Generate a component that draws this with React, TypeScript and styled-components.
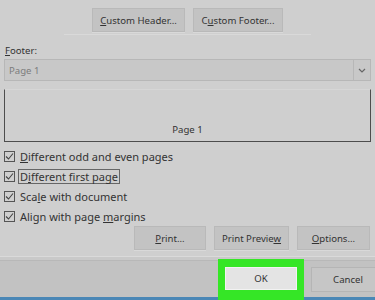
import React from "react";
import styled, { createGlobalStyle } from "styled-components";

const Global = createGlobalStyle`
  html, body { margin: 0; padding: 0; }
  body {
    width: 375px; height: 300px; overflow: hidden;
    background: #cfcfcf;
    font-family: "Noto Sans", "Open Sans", sans-serif;
    font-size: 11px;
    color: #333;
  }
`;

const Dialog = styled.div`
  width: 375px;
  height: 300px;
  display: flex;
  flex-direction: column;
  background: #cfcfcf;
  position: relative;
  overflow: hidden;
`;

const Body = styled.div`
  display: flex;
  flex-direction: column;
  padding: 0 4px 0 4px;
`;

const HeaderRow = styled.div`
  display: flex;
  justify-content: center;
  gap: 8px;
  padding-top: 8px;
  padding-bottom: 2px;
  border-bottom: 1px solid #d9d9d9;
  margin: 0 60px;
`;

const Button = styled.button<{ $w: number }>`
  width: ${(p) => p.$w}px;
  height: 24px;
  background: #c3c3c3;
  border: 1px solid #b9b9b9;
  font-family: inherit;
  font-size: 9.6px;
  color: #333;
  padding: 0;
  display: flex;
  align-items: center;
  justify-content: center;
  box-sizing: border-box;
  box-shadow: 0 1px 0 #d9d9d9;
`;

const Label = styled.div`
  margin-top: 9px;
  padding-left: 1px;
  height: 14px;
  line-height: 14px;
  font-size: 9.6px;
`;

const Combo = styled.div`
  margin-top: 1px;
  height: 22px;
  box-sizing: border-box;
  border: 1px solid #b7b7b7;
  background: #c8c8c8;
  display: flex;
  align-items: stretch;
`;

const ComboText = styled.div`
  flex: 1;
  padding-left: 4px;
  display: flex;
  align-items: center;
  color: #7c7c7c;
  font-size: 9.6px;
`;

const ComboArrow = styled.div`
  width: 16px;
  border-left: 1px solid #b7b7b7;
  display: flex;
  align-items: center;
  justify-content: center;
`;

const Preview = styled.div`
  margin-top: 8px;
  height: 53px;
  box-sizing: border-box;
  border: 1px solid #4d4d4d;
  border-top-color: #d6d6d6;
  display: flex;
  align-items: flex-end;
  justify-content: center;
  padding-bottom: 5px;
  font-size: 9.6px;
`;

const Checks = styled.div`
  display: flex;
  flex-direction: column;
  gap: 5px;
  margin-top: 7px;
`;

const CheckRow = styled.div`
  display: flex;
  align-items: center;
  height: 15px;
  gap: 3px;
`;

const Box = styled.span`
  width: 11px;
  height: 11px;
  box-sizing: border-box;
  border: 1px solid #555;
  display: flex;
  align-items: center;
  justify-content: center;
`;

const CheckText = styled.span<{ $focus?: boolean }>`
  padding: 0 1px;
  border: 1px solid ${(p) => (p.$focus ? "#666" : "transparent")};
  line-height: 13px;
  font-size: 11px;
`;

const ActionRow = styled.div`
  display: flex;
  justify-content: flex-end;
  gap: 8px;
  margin-top: 2px;
  padding-right: 1px;
`;

const Separator = styled.div`
  margin-top: 6px;
  height: 5px;
  border-top: 1px solid #dadada;
  border-bottom: 1px solid #b8b8b8;
  background: #c9c9c9;
  box-sizing: border-box;
`;

const Footer = styled.div`
  flex: 1;
  background: #c2c2c2;
  display: flex;
  align-items: flex-start;
  justify-content: flex-end;
  padding-top: 6px;
  gap: 7px;
  border-bottom: 3px solid #4a87b6;
  margin-right: -10px;
`;

const Highlight = styled.div`
  margin-top: -8px;
  padding: 8px 7px;
  background: #35e626;
  margin-bottom: -12px;
  align-self: stretch;
  position: relative;
  z-index: 1;
`;

const OkButton = styled.button`
  width: 72px;
  height: 23px;
  background: #e4e4e4;
  border: 1px solid #f2f2f2;
  font-family: inherit;
  font-size: 9.6px;
  color: #333;
  padding: 0;
`;

const CancelButton = styled.button`
  width: 74px;
  height: 25px;
  background: #c6c6c6;
  border: 1px solid #b5b5b5;
  font-family: inherit;
  font-size: 9.6px;
  color: #333;
  padding: 0;
`;

const Check = () => (
  <svg width="9" height="9" viewBox="0 0 9 9">
    <path d="M1 4.5 L3.5 7 L8 1.5" fill="none" stroke="#444" strokeWidth="1.1" />
  </svg>
);

const Chevron = () => (
  <svg width="8" height="5" viewBox="0 0 8 5">
    <path d="M1 1 L4 4 L7 1" fill="none" stroke="#666" strokeWidth="1.2" />
  </svg>
);

const checks: { label: React.ReactNode; focus?: boolean }[] = [
  { label: <><u>D</u>ifferent odd and even pages</> },
  { label: <>D<u>i</u>fferent first page</>, focus: true },
  { label: <>Sca<u>l</u>e with document</> },
  { label: <>Align with page <u>m</u>argins</> },
];

export default function App() {
  return (
    <>
      <Global />
      <Dialog>
        <Body>
          <HeaderRow>
            <Button $w={93}><span><u>C</u>ustom Header...</span></Button>
            <Button $w={90}><span>C<u>u</u>stom Footer...</span></Button>
          </HeaderRow>
          <Label><u>F</u>ooter:</Label>
          <Combo>
            <ComboText>Page 1</ComboText>
            <ComboArrow><Chevron /></ComboArrow>
          </Combo>
          <Preview>Page 1</Preview>
          <Checks>
            {checks.map((c, i) => (
              <CheckRow key={i}>
                <Box><Check /></Box>
                <CheckText $focus={c.focus}>{c.label}</CheckText>
              </CheckRow>
            ))}
          </Checks>
          <ActionRow>
            <Button $w={72}><span><u>P</u>rint...</span></Button>
            <Button $w={75}><span>Print Previe<u>w</u></span></Button>
            <Button $w={73}><span><u>O</u>ptions...</span></Button>
          </ActionRow>
        </Body>
        <Separator />
        <Footer>
          <Highlight>
            <OkButton>OK</OkButton>
          </Highlight>
          <CancelButton>Cancel</CancelButton>
        </Footer>
      </Dialog>
    </>
  );
}
